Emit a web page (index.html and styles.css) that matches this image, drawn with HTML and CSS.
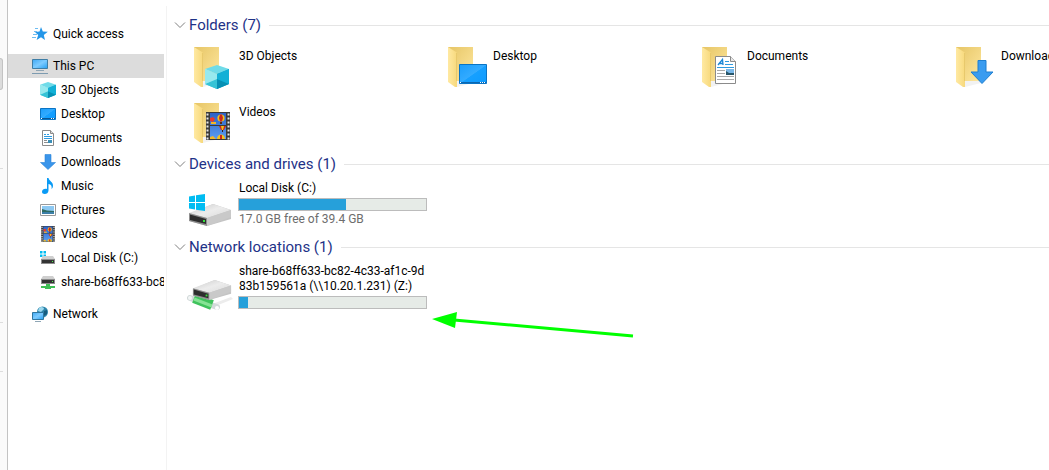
FILE: index.html
```
<!doctype html>
<html lang="en">

<head>
    <meta charset="utf-8">
    <title>This PC</title>
    <link rel="stylesheet" href="styles.css">
</head>
<body>
    <!-- shared shapes -->
    <svg class="defs" aria-hidden="true">
        <defs>
            <linearGradient id="gFlap" x1="0" y1="0" x2="1" y2="0">
                <stop offset="0" stop-color="#ffe9a2"/><stop offset="1" stop-color="#f7d97c"/>
            </linearGradient>
            <linearGradient id="gBack" x1="0" y1="0" x2="1" y2="1">
                <stop offset="0" stop-color="#e6c565"/><stop offset="1" stop-color="#ffe8a0"/>
            </linearGradient>
            <linearGradient id="gScreen" x1="0" y1="0" x2="1" y2="1">
                <stop offset="0" stop-color="#1b9dfb"/><stop offset=".5" stop-color="#33abff"/><stop offset=".52" stop-color="#16a0ff"/><stop offset="1" stop-color="#0d9bff"/>
            </linearGradient>
            <linearGradient id="gPc" x1="0" y1="0" x2="1" y2="1">
                <stop offset="0" stop-color="#3fa9f5"/><stop offset=".5" stop-color="#7dcbff"/><stop offset="1" stop-color="#259ff2"/>
            </linearGradient>
            <linearGradient id="gCube" x1="0" y1="0" x2="1" y2="1">
                <stop offset="0" stop-color="#a5f0f2"/><stop offset="1" stop-color="#1fb4d2"/>
            </linearGradient>
            <linearGradient id="gDisk" x1="0" y1="0" x2="1" y2="1">
                <stop offset="0" stop-color="#c9c9c9"/><stop offset=".5" stop-color="#ececec"/><stop offset="1" stop-color="#dadada"/>
            </linearGradient>
            <linearGradient id="gSky" x1="0" y1="0" x2="0" y2="1">
                <stop offset="0" stop-color="#2c62c8"/><stop offset="1" stop-color="#5a9cf0"/>
            </linearGradient>
        </defs>
        <symbol id="folder" viewBox="0 0 48 48">
            <path d="M15 37h18l3 1-20 5z" fill="#e9e9e9" opacity=".6"/>
            <path d="M7 3h25v34H7z" fill="url(#gBack)"/>
            <path d="M7 3l8 5 1 1v34l-2 0-7-5z" fill="url(#gFlap)"/>
            <path d="M15.500 9v28" stroke="#e8c96c" stroke-width="1"/>
        </symbol>
        <symbol id="cube" viewBox="0 0 24 24">
            <path d="M0 4L12 0l12 4-12 5z" fill="#6fdbe8"/>
            <path d="M0 4l12 5v15L0 19z" fill="url(#gCube)"/>
            <path d="M24 4L12 9v15l12-5z" fill="#04a2c9"/>
            <path d="M0 19l12-5v10z" fill="#36c3d6"/>
            <path d="M24 19l-12-5v10z" fill="#0790b4"/>
            <path d="M12 9v5L0 19V4z" fill="#97e9ee"/>
            <path d="M12 9v5l12 5V4z" fill="#12b0d6"/>
        </symbol>
        <symbol id="screen" viewBox="0 0 28 20">
            <path d="M.5.5h27v19H.5z" fill="url(#gScreen)" stroke="#0a74c4"/>
            <path d="M1 18h26v1H1z" fill="#0c66b0"/>
            <path d="M1 18h1v1H1zM21 18h1v1h-1zM23 18h1v1h-1zM25 18h1v1h-1z" fill="#fff"/>
        </symbol>
        <symbol id="film" viewBox="0 0 24 28">
            <path d="M0 0h24v28H0z" fill="#3a3a3a"/>
            <path d="M4 1h16v12H4zM4 14h16v13H4z" fill="url(#gSky)"/>
            <path d="M1.500 1.500v26M22.500 1.500v26" stroke="#e8e8e8" stroke-width="2" stroke-dasharray="2 2"/>
            <circle cx="15" cy="6" r="3.600" fill="#f5c21b"/>
            <path d="M14 2.500h2l1 3.500-1 3.500h-2L13 6z" fill="#c9281e"/>
            <path d="M14 10h2v2h-2z" fill="#5c2a10"/>
            <path d="M4 6l3-1 2 2-2 3-3-1z" fill="#e83a2c"/>
            <path d="M5 10h5v2H5z" fill="#f0b82a"/>
            <path d="M13 14h7l-2 4h-3z" fill="#c9281e"/>
            <path d="M15 14h3l-1 4h-1z" fill="#f5c21b"/>
            <path d="M16 18h1v2h-1z" fill="#3c1a10"/>
            <path d="M11 27c0-6 8-6 8 0z" fill="#f5c21b"/>
            <path d="M14 23h2v4h-2z" fill="#c9281e"/>
            <path d="M4 25l3-1 3 3H4z" fill="#f0b82a"/>
        </symbol>
        <symbol id="doc" viewBox="0 0 21 28">
            <path d="M.5.5h15l5 5v22H.5z" fill="#fff" stroke="#8b8b8b"/>
            <path d="M15.500.5v5h5" fill="#e8e8e8" stroke="#8b8b8b"/>
            <path d="M3 9L7.500 3.500 8 9M4.500 7.500H8" fill="none" stroke="#1b87d6" stroke-width="1.300"/>
            <path d="M10 5.500h4M10 8.500h8M2 11.500h17" stroke="#2f9be0"/>
            <path d="M2 14.500h8M2 17.500h8M2 20.500h17M2 23.500h17" stroke="#a9a9a9"/>
            <path d="M11 13h8v6h-8z" fill="#7ab8e8"/><path d="M11 15l3 2h5v2h-8z" fill="#28566a"/>
        </symbol>
        <symbol id="arrow" viewBox="0 0 24 24">
            <path d="M8 .5h8V12h7L12 23.500 1 12h7z" fill="#3a9cf0" stroke="#1f7fd0"/>
        </symbol>
        <symbol id="windows" viewBox="0 0 16 17">
            <path d="M0 2.500l6-1V8H0zM7 1.300L16 0v8H7zM0 9h6v6.500l-6-1zM7 9h9v8l-9-1.300z" fill="#00bcf2"/>
        </symbol>
        <symbol id="disk" viewBox="0 0 42 22">
            <path d="M0 10L24 0l18 6v9L18 22 0 17z" fill="#c4c4c4"/>
            <path d="M0 9L24 0l18 6-24 8z" fill="url(#gDisk)"/>
            <path d="M18 14l24-8v7l-24 9z" fill="#c9c9c9"/>
            <path d="M0 9l18 5v8L0 17z" fill="#8f8f8f"/>
            <path d="M1 10.500l16 4.500v5L1 16z" fill="#2d2d2d"/>
            <path d="M14 16h2v2h-2z" fill="#35e23b"/>
        </symbol>
        <symbol id="minidisk" viewBox="0 0 14 8">
            <path d="M2 0h10l2 3H0z" fill="#cfcfcf"/>
            <path d="M0 3h14v5H0z" fill="#8d8d8d"/>
            <path d="M1 4h12v3H1z" fill="#333"/>
            <path d="M11 5h1v1h-1z" fill="#4bf04b"/>
        </symbol>
    </svg>

    <div class="window">
        <div class="strip">
            <span class="strip-thumb"></span>
            <span class="strip-line"></span>
            <span class="strip-line second"></span>
            <span class="strip-line third"></span>
        </div>

        <nav class="tree" aria-label="Navigation pane">
            <a class="node root" href="#">
                <svg class="ico" viewBox="0 0 16 16"><path d="M9 1l1.800 4.500 5 .3-4 3.200 1.200 5L9 11.300 4.600 14l1.600-5L3 6l4.500-.5z" fill="#2496e8"/><path d="M2 5.500h3M1 8.500h4M0 11.500h4M3 2.500h3" stroke="#6dbcf2"/></svg>
                <span>Quick access</span>
            </a>
            <a class="node root gap active" href="#">
                <svg class="ico" viewBox="0 0 16 16"><path d="M.5 1.500h15v9H.5z" fill="url(#gPc)" stroke="#3f7ea6"/><path d="M4 12.500h8" stroke="#8fa6b5"/><path d="M0 15.500h16" stroke="#7d9bb0"/></svg>
                <span>This PC</span>
            </a>
            <a class="node" href="#">
                <svg class="ico" viewBox="0 0 16 16"><use href="#cube" width="16" height="16"/></svg>
                <span>3D Objects</span>
            </a>
            <a class="node" href="#">
                <svg class="ico" viewBox="0 0 16 16"><path d="M.5 2.500h15v11H.5z" fill="url(#gScreen)" stroke="#0a74c4"/><path d="M1 12.500h14" stroke="#0b5794"/><path d="M1 12h1v1H1zM11 12h1v1h-1zM13 12h1v1h-1z" fill="#fff"/></svg>
                <span>Desktop</span>
            </a>
            <a class="node" href="#">
                <svg class="ico" viewBox="0 0 16 16"><path d="M2.500.5h8l3 3v12h-11z" fill="#fff" stroke="#8b8b8b"/><path d="M10.500.5v3h3" fill="#ddd" stroke="#8b8b8b"/><path d="M4 4.500h2M7 4.500h2M4 6.500h8M4 8.500h8" stroke="#2f9be0"/><path d="M4 10.500h3M4 12.500h8" stroke="#8f8f8f"/><path d="M8 10h4v3H8z" fill="#3a8fb8"/></svg>
                <span>Documents</span>
            </a>
            <a class="node" href="#">
                <svg class="ico" viewBox="0 0 16 16"><path d="M5 .5h6v8h4.500L8 15.500.5 8.500H5z" fill="#3a95ea" stroke="#2a84d8" stroke-width=".6"/></svg>
                <span>Downloads</span>
            </a>
            <a class="node" href="#">
                <svg class="ico" viewBox="0 0 16 16"><path d="M7 0h1.500c.5 3 5 4 4.500 8-.1 1.500-.8 2.500-1.500 3 .7-3-.5-4.500-3-5v6.500C8.500 15 6.500 16 4.800 16 3 16 2 15 2 13.700c0-2 2.500-3.500 5-2.700z" fill="#0a9bf5"/></svg>
                <span>Music</span>
            </a>
            <a class="node" href="#">
                <svg class="ico" viewBox="0 0 16 16"><path d="M.5 2.500h15v11H.5z" fill="#fff" stroke="#9a9a9a"/><path d="M2 4h12v8H2z" fill="#8cc8f2"/><path d="M2 7l5 1.500 7 .5v1H2z" fill="#2f6b62"/><path d="M2 10h12v2H2z" fill="#3b7fa8"/></svg>
                <span>Pictures</span>
            </a>
            <a class="node" href="#">
                <svg class="ico" viewBox="0 0 16 16"><use href="#film" x="1" width="14" height="16"/></svg>
                <span>Videos</span>
            </a>
            <a class="node" href="#">
                <svg class="ico" viewBox="0 0 16 16"><path d="M0 1h2.500v2.500H0zM3.500 1H6v2.500H3.500zM0 4.500h2.500V7H0zM3.500 4.500H6V7H3.500z" fill="#00bcf2"/><use href="#minidisk" x="1" y="6" width="14" height="8"/></svg>
                <span>Local Disk (C:)</span>
            </a>
            <a class="node" href="#">
                <svg class="ico" viewBox="0 0 16 16"><use href="#minidisk" x="1" y="2" width="14" height="8"/><path d="M6 10h4v2h5v2h-4v1H5v-1H1v-2h5z" fill="#3fbf55"/></svg>
                <span>share-b68ff633-bc82-4c33-af1c-9d83b159561a</span>
            </a>
            <a class="node root gap" href="#">
                <svg class="ico" viewBox="0 0 16 16"><circle cx="10.500" cy="6" r="5.500" fill="#2f86ab"/><path d="M7 2c2-2 5-1 5 1L9 6 6 5z" fill="#9ed9ef"/><path d="M12 5l3-1v4l-3 2z" fill="#175d80"/><path d="M.5 6.500h11v7H.5z" fill="url(#gPc)" stroke="#2f769f"/><path d="M3 15.500h6" stroke="#8fa6b5"/></svg>
                <span>Network</span>
            </a>
        </nav>

        <main class="content">
            <section>
                <h2><button class="group" aria-expanded="true"><svg class="chev" viewBox="0 0 12 12"><path d="M1 3.500l5 5 5-5"/></svg>Folders (7)</button></h2>
                <div class="tiles">
                    <a class="tile" href="#">
                        <svg class="big" viewBox="0 0 48 48"><use href="#folder" width="48" height="48"/><use href="#cube" x="18" y="21" width="24" height="24"/></svg>
                        <span class="name">3D Objects</span>
                    </a>
                    <a class="tile" href="#">
                        <svg class="big" viewBox="0 0 48 48"><use href="#folder" width="48" height="48"/><use href="#screen" x="18" y="20" width="28" height="20"/></svg>
                        <span class="name">Desktop</span>
                    </a>
                    <a class="tile" href="#">
                        <svg class="big" viewBox="0 0 48 48"><use href="#folder" width="48" height="48"/><use href="#doc" x="20" y="12" width="21" height="28"/></svg>
                        <span class="name">Documents</span>
                    </a>
                    <a class="tile" href="#">
                        <svg class="big" viewBox="0 0 48 48"><use href="#folder" width="48" height="48"/><use href="#arrow" x="21" y="16" width="24" height="24"/></svg>
                        <span class="name">Downloads</span>
                    </a>
                    <a class="tile" href="#">
                        <svg class="big" viewBox="0 0 48 48"><use href="#folder" width="48" height="48"/><use href="#film" x="19" y="12" width="24" height="28"/></svg>
                        <span class="name">Videos</span>
                    </a>
                </div>
            </section>

            <section>
                <h2><button class="group" aria-expanded="true"><svg class="chev" viewBox="0 0 12 12"><path d="M1 3.500l5 5 5-5"/></svg>Devices and drives (1)</button></h2>
                <div class="tiles">
                    <a class="tile drive" href="#">
                        <svg class="big" viewBox="0 0 48 48"><use href="#disk" x="2" y="21" width="42" height="22"/><use href="#windows" x="2" y="11" width="16" height="17"/></svg>
                        <span class="info">
                            <span class="label">Local Disk (C:)</span>
                            <span class="bar"><span class="used" style="width:57%"></span></span>
                            <span class="label free">17.0 GB free of 39.4 GB</span>
                        </span>
                    </a>
                </div>
            </section>

            <section>
                <h2><button class="group" aria-expanded="true"><svg class="chev" viewBox="0 0 12 12"><path d="M1 3.500l5 5 5-5"/></svg>Network locations (1)</button></h2>
                <div class="tiles">
                    <a class="tile drive" href="#">
                        <svg class="big" viewBox="0 0 48 48">
                            <path d="M20 40l24-9 2 2-22 9z" fill="#ececec"/>
                            <path d="M3 32l27 9" stroke="#d3dada" stroke-width="6" stroke-linecap="round"/>
                            <path d="M7 32l18 7" stroke="#3fc25c" stroke-width="10"/>
                            <path d="M7 33l18 7" stroke="#86e394" stroke-width="3"/>
                            <circle cx="3" cy="32" r="2" fill="#f4f6f6"/>
                            <circle cx="30" cy="42" r="2" fill="#fff"/>
                            <use href="#disk" x="4" y="14" width="42" height="20" preserveAspectRatio="none"/>
                        </svg>
                        <span class="info">
                            <span class="label">share-b68ff633-bc82-4c33-af1c-9d<br>83b159561a (\\10.20.1.231) (Z:)</span>
                            <span class="bar"><span class="used" style="width:5%"></span></span>
                        </span>
                    </a>
                </div>
            </section>
        </main>

        <!-- arrow drawn over the window -->
        <svg class="pointer" viewBox="0 0 204 28" aria-hidden="true">
            <path d="M22 8l179 16" stroke="#0f0" stroke-width="3"/>
            <path d="M0 7L25 0l-2 16z" fill="#0f0"/>
        </svg>
    </div>
</body>

</html>
```
FILE: styles.css
```
* {
    box-sizing: border-box;
}

html,
body {
    height: 100%;
    margin: 0;
}

body {
    background: #fff;
    color: #000;
    font: 12px/15px Roboto, "Open Sans", sans-serif;
    overflow: hidden;
}

a {
    color: inherit;
    text-decoration: none;
}

.defs {
    position: absolute;
    width: 0;
    height: 0;
}

.window {
    position: relative;
    display: flex;
    min-height: 100%;
    overflow: hidden;
}

/* edge of the window behind */
.strip {
    flex: none;
    display: flex;
    flex-direction: column;
    width: 8px;
    padding-top: 58px;
    background: #fafafa;
    border-right: 1px solid #c3c3c3;
}

.strip-thumb {
    width: 3px;
    height: 32px;
    background: #dcdcdc;
    border: 1px solid #c3c3c3;
    border-left: none;
    border-radius: 0 3px 3px 0;
}

.strip-line {
    width: 3px;
    height: 1px;
    margin-top: 78px;
    background: #ddd;
}

.strip-line.second {
    margin-top: 153px;
}

.strip-line.third {
    margin-top: 48px;
}

/* navigation pane */
.tree {
    flex: none;
    width: 156px;
    padding-top: 22px;
}

.node {
    display: flex;
    align-items: center;
    gap: 5px;
    height: 24px;
    padding-left: 32px;
    white-space: nowrap;
    overflow: hidden;
}

.node.root {
    padding-left: 24px;
}

.node.gap {
    margin-top: 8px;
}

.node.active {
    background: #dcdcdc;
}

.node:hover {
    background: #e5f3ff;
}

.node.active:hover {
    background: #dcdcdc;
}

.ico {
    flex: none;
    width: 16px;
    height: 16px;
}

/* file list */
.content {
    flex: 1;
    min-width: 0;
    margin: 6px 0 0 2px;
    padding: 7px 0 0 7px;
    border-left: 1px solid #f3f3f3;
}

section {
    padding-bottom: 4px;
}

h2 {
    display: flex;
    align-items: center;
    gap: 8px;
    height: 24px;
    margin: 0;
}

h2:after {
    content: "";
    flex: 1;
    height: 1px;
    background: #e5e5e5;
}

.group {
    display: flex;
    align-items: center;
    gap: 3px;
    padding: 0;
    border: none;
    background: none;
    color: #1e3287;
    font: 15px/20px Roboto, "Open Sans", sans-serif;
    cursor: pointer;
}

.chev {
    width: 12px;
    height: 12px;
    fill: none;
    stroke: #808080;
}

.tiles {
    display: grid;
    grid-template-columns: repeat(4, 254px);
    row-gap: 8px;
    padding: 7px 0 0 13px;
}

.tile {
    display: flex;
    gap: 3px;
    height: 48px;
}

.big {
    flex: none;
    width: 48px;
    height: 48px;
}

.name {
    padding: 5px 0 0 1px;
}

.info {
    display: flex;
    flex-direction: column;
    width: 189px;
    margin-top: -2px;
    white-space: nowrap;
}

.label {
    padding-left: 1px;
}

.bar {
    flex: none;
    height: 13px;
    margin: 2px 0 1px;
    background: #e6ebe7;
    border: 1px solid #bcbcbc;
}

.used {
    display: block;
    height: 100%;
    background: #26a0da;
}

.free {
    color: #6d6d6d;
}

.pointer {
    position: absolute;
    left: 432px;
    top: 312px;
    width: 204px;
    height: 28px;
}
```
